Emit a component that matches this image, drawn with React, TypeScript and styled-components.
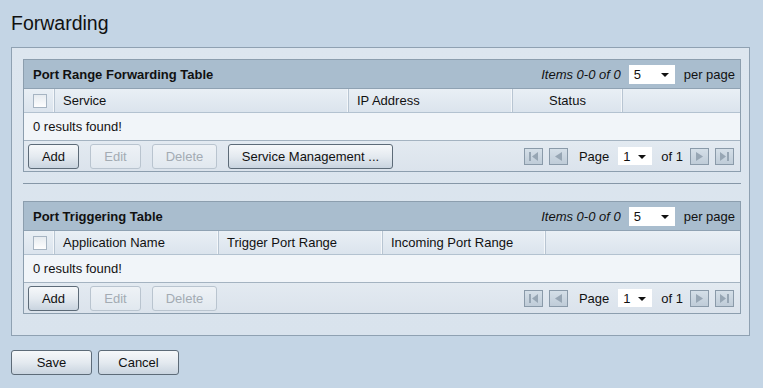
import React from "react";
import styled, { createGlobalStyle } from "styled-components";

const Global = createGlobalStyle`
  html, body {
    margin: 0;
    padding: 0;
    background: #c4d5e5;
    font-family: Arial, "Liberation Sans", sans-serif;
    font-size: 13px;
    color: #111;
  }
`;

const Page = styled.div`
  padding: 0 11px;
  width: 739px;
`;

const Title = styled.h1`
  margin: 0;
  padding-top: 12px;
  height: 47px;
  box-sizing: border-box;
  font-size: 19.5px;
  font-weight: normal;
  line-height: 22px;
`;

const Panel = styled.div`
  border: 1px solid #8fa1b2;
  background: linear-gradient(#dde6ef, #d9e3ed);
  padding: 11px 8px 21px 11px;
`;

const Separator = styled.div`
  height: 1px;
  background: #8697a7;
  margin: 11px 0 17px;
`;

const Table = styled.div`
  border: 1px solid #8c9eae;
  width: 716px;
`;

const HeadBar = styled.div`
  height: 28px;
  background: #a9bdce;
  display: flex;
  align-items: center;
  padding: 0 5px 0 9px;
  border-bottom: 1px solid #8fa2b3;
`;

const HeadTitle = styled.div`
  font-weight: bold;
  flex: 1;
`;

const Items = styled.span`
  font-style: italic;
  margin-right: 8px;
`;

const Select = styled.div<{ $w: number; $h: number }>`
  width: ${(p) => p.$w}px;
  height: ${(p) => p.$h}px;
  background: #fff;
  box-sizing: border-box;
  display: flex;
  align-items: center;
  justify-content: space-between;
  padding: 0 6px 0 5px;
  margin-right: 9px;
`;

const Arrow = styled.span`
  width: 0;
  height: 0;
  border-left: 4px solid transparent;
  border-right: 4px solid transparent;
  border-top: 4px solid #111;
  margin-top: 2px;
`;

const ColRow = styled.div<{ $cols: string }>`
  display: grid;
  grid-template-columns: ${(p) => p.$cols};
  height: 23px;
  background: linear-gradient(#e9eff5, #dbe4ed);
  border-bottom: 1px solid #b3c2d0;
`;

const Col = styled.div<{ $center?: boolean }>`
  display: flex;
  align-items: center;
  justify-content: ${(p) => (p.$center ? "center" : "flex-start")};
  padding-left: ${(p) => (p.$center ? 0 : 8)}px;
  border-right: 1px solid #b8c5d2;
  box-shadow: inset -1px 0 0 #f4f7fa;
  &:last-child {
    border-right: none;
    box-shadow: none;
  }
`;

const Check = styled.span`
  width: 12px;
  height: 12px;
  border: 1px solid #a6b4c2;
  background: linear-gradient(#e6ebf0, #fdfdfe);
  margin-left: 1px;
`;

const Results = styled.div`
  height: 27px;
  background: #f1f5f9;
  border-bottom: 1px solid #a4b3c1;
  display: flex;
  align-items: center;
  padding-left: 9px;
`;

const ActionRow = styled.div`
  height: 30px;
  background: linear-gradient(#e3eaf1, #dbe3ec);
  display: flex;
  align-items: center;
  padding: 0 6px 0 4px;
  gap: 11px;
`;

const Button = styled.button<{ $w: number; $disabled?: boolean }>`
  width: ${(p) => p.$w}px;
  height: 25px;
  font-family: Arial, "Liberation Sans", sans-serif;
  font-size: 13px;
  padding: 0;
  border-radius: 3px;
  border: 1px solid ${(p) => (p.$disabled ? "#b9c4cf" : "#5d6b78")};
  color: ${(p) => (p.$disabled ? "#a3abb3" : "#111")};
  background: ${(p) =>
    p.$disabled
      ? "linear-gradient(#eef2f6, #e1e8ef)"
      : "linear-gradient(#f6f8fa 0%, #e4eaf0 50%, #c9d4df 100%)"};
`;

const Spacer = styled.div`
  flex: 1;
`;

const Pager = styled.div`
  display: flex;
  align-items: center;
`;

const PageBtn = styled.span<{ $gap?: number }>`
  width: 17px;
  height: 15px;
  border: 1px solid #8a9aa9;
  background: linear-gradient(#d5dfe8, #bfccd8);
  display: flex;
  align-items: center;
  justify-content: center;
  margin-right: ${(p) => p.$gap ?? 0}px;
`;

const PagerText = styled.span<{ $mr: number }>`
  margin-right: ${(p) => p.$mr}px;
`;

const Footer = styled.div`
  display: flex;
  gap: 6px;
  margin-top: 14px;
`;

const icon = (kind: "first" | "prev" | "next" | "last") => {
  const fill = "#97a6b4";
  return (
    <svg width="13" height="11" viewBox="0 0 13 11">
      {kind === "first" && (
        <>
          <rect x="2" y="1" width="2" height="9" fill={fill} />
          <polygon points="11,1 11,10 5,5.5" fill={fill} />
        </>
      )}
      {kind === "prev" && <polygon points="10,1 10,10 3,5.5" fill={fill} />}
      {kind === "next" && <polygon points="3,1 3,10 10,5.5" fill={fill} />}
      {kind === "last" && (
        <>
          <polygon points="2,1 2,10 8,5.5" fill={fill} />
          <rect x="9" y="1" width="2" height="9" fill={fill} />
        </>
      )}
    </svg>
  );
};

const Pagination = () => (
  <Pager>
    <PageBtn $gap={6}>{icon("first")}</PageBtn>
    <PageBtn $gap={11}>{icon("prev")}</PageBtn>
    <PagerText $mr={9}>Page</PagerText>
    <Select $w={34} $h={18}>
      1<Arrow />
    </Select>
    <PagerText $mr={7}>of 1</PagerText>
    <PageBtn $gap={6}>{icon("next")}</PageBtn>
    <PageBtn>{icon("last")}</PageBtn>
  </Pager>
);

type Column = { label: string; center?: boolean };

const DataTable = ({
  title,
  cols,
  template,
  extra,
}: {
  title: string;
  cols: Column[];
  template: string;
  extra?: boolean;
}) => (
  <Table>
    <HeadBar>
      <HeadTitle>{title}</HeadTitle>
      <Items>Items 0-0 of 0</Items>
      <Select $w={46} $h={19}>
        5<Arrow />
      </Select>
      <span>per page</span>
    </HeadBar>
    <ColRow $cols={template}>
      <Col>
        <Check />
      </Col>
      {cols.map((c) => (
        <Col key={c.label} $center={c.center}>
          {c.label}
        </Col>
      ))}
      <Col />
    </ColRow>
    <Results>0 results found!</Results>
    <ActionRow>
      <Button $w={51}>Add</Button>
      <Button $w={51} $disabled>
        Edit
      </Button>
      <Button $w={65} $disabled>
        Delete
      </Button>
      {extra && <Button $w={165}>Service Management ...</Button>}
      <Spacer />
      <Pagination />
    </ActionRow>
  </Table>
);

export default function App() {
  return (
    <Page>
      <Global />
      <Title>Forwarding</Title>
      <Panel>
        <DataTable
          title="Port Range Forwarding Table"
          template="31px 294px 164px 110px 1fr"
          cols={[
            { label: "Service" },
            { label: "IP Address" },
            { label: "Status", center: true },
          ]}
          extra
        />
        <Separator />
        <DataTable
          title="Port Triggering Table"
          template="31px 164px 164px 163px 1fr"
          cols={[
            { label: "Application Name" },
            { label: "Trigger Port Range" },
            { label: "Incoming Port Range" },
          ]}
        />
      </Panel>
      <Footer>
        <Button $w={81}>Save</Button>
        <Button $w={81}>Cancel</Button>
      </Footer>
    </Page>
  );
}
